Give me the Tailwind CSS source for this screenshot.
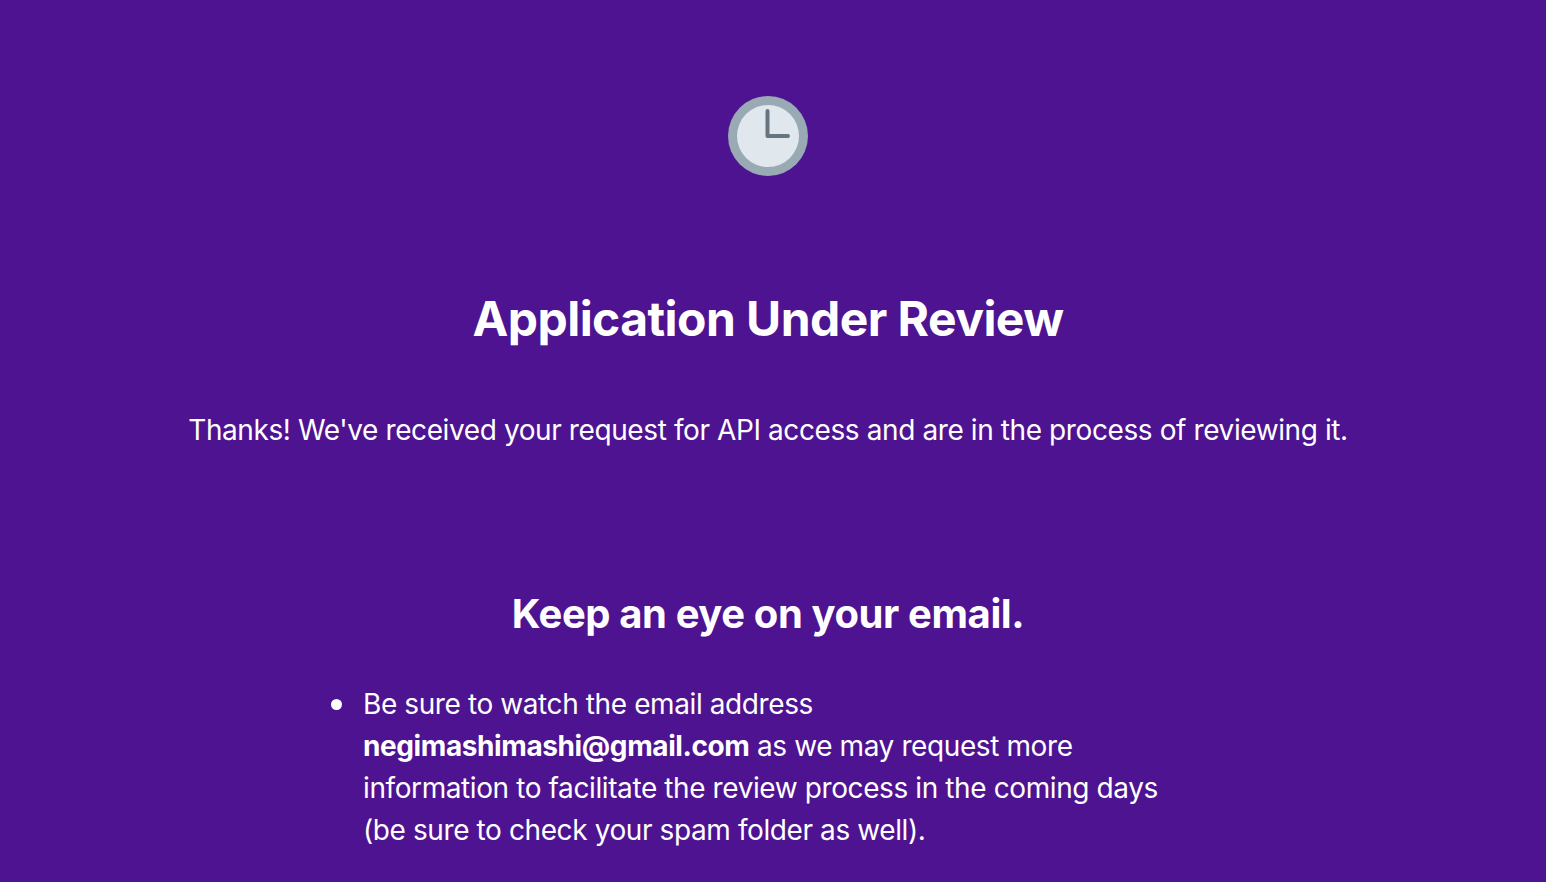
<!DOCTYPE html>
<html lang="en">
  <head>
    <meta charset="UTF-8" />
    <meta name="viewport" content="width=device-width, initial-scale=1.0" />
    <script src="https://cdn.jsdelivr.net/npm/@tailwindcss/browser@4"></script>
    <title>Application Under Review</title>
  </head>
  <body class="bg-[#4e1391] text-white font-['Inter',sans-serif] h-screen overflow-hidden">
    <main class="flex flex-col items-center pt-24 pr-[10px]">
      <!-- clock -->
      <svg class="w-20 h-20" viewBox="0 0 80 80" aria-hidden="true">
        <circle cx="40" cy="40" r="40" fill="#99AAB5" />
        <circle cx="40" cy="40" r="31" fill="#E1E8ED" />
        <path d="M39.5 15V40H60" fill="none" stroke="#66757F" stroke-width="4" stroke-linecap="round" stroke-linejoin="round" />
      </svg>

      <h1 class="mt-[114px] text-5xl leading-[58px] font-bold tracking-[-0.55px]">Application Under Review</h1>
      <p class="mt-[61px] text-[28px] leading-[42px] tracking-[-0.4px]">Thanks! We've received your request for API access and are in the process of reviewing it.</p>

      <h2 class="mt-[141px] text-[40px] leading-[44px] font-bold tracking-[-0.4px]">Keep an eye on your email.</h2>
      <ul class="mt-[47px] w-[872px] ml-[-2px] text-[28px] leading-[42px] tracking-[-0.4px]">
        <li class="flex gap-[21px]">
          <span class="mt-[16px] size-[11px] shrink-0 rounded-full bg-white"></span>
          <div class="w-[860px]">Be sure to watch the email address <strong class="font-bold">negimashimashi@gmail.com</strong> as we may request more information to facilitate the review process in the coming days (be sure to check your spam folder as well).</div>
        </li>
      </ul>
    </main>
  </body>
</html>
